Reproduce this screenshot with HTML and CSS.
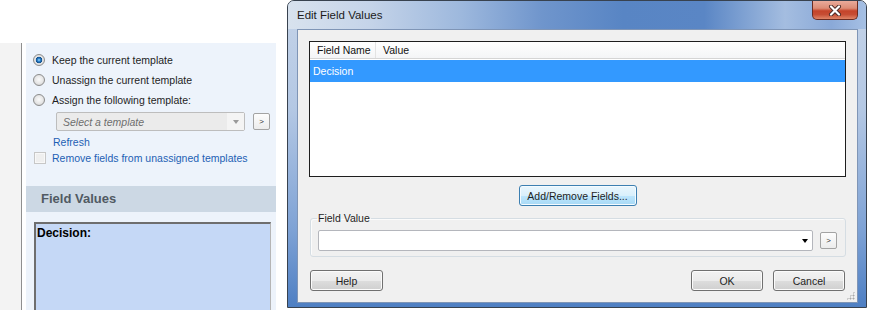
FILE: index.html
```html
<!DOCTYPE html>
<html lang="en">
<head>
  <meta charset="UTF-8" />
  <meta name="viewport" content="width=device-width, initial-scale=1.0" />
  <title>Edit Field Values</title>
  <link rel="stylesheet" href="styles.css">
</head>
<body>
  <div class="screen">
    <div class="host">
      <div class="host-top"></div>
      <div class="host-body">
        <div class="gutter"></div>
        <div class="panel">
          <div class="options">
            <label class="opt"><span class="radio checked"></span>Keep the current template</label>
            <label class="opt"><span class="radio"></span>Unassign the current template</label>
            <label class="opt"><span class="radio"></span>Assign the following template:</label>
            <div class="tpl-row">
              <div class="tpl-select">
                <span class="tpl-text">Select a template</span>
                <span class="tpl-drop"><span class="tri gray"></span></span>
              </div>
              <button class="mini-btn">&gt;</button>
            </div>
            <a class="link refresh">Refresh</a>
            <label class="opt check-opt"><span class="check"></span><span class="link">Remove fields from unassigned templates</span></label>
          </div>
          <div class="section-head">Field Values</div>
          <div class="section-body">
            <div class="notes"><b>Decision:</b></div>
          </div>
        </div>
      </div>
    </div>

    <div class="dialog">
      <div class="titlebar">
        <span class="title">Edit Field Values</span>
        <button class="close">
          <svg width="16" height="11" viewBox="0 0 16 11">
            <path d="M4 1.5 L12 9.5 M12 1.5 L4 9.5" stroke="#4a2a26" stroke-width="4" stroke-linecap="round" fill="none"/>
            <path d="M4 1.5 L12 9.5 M12 1.5 L4 9.5" stroke="#ffffff" stroke-width="2.2" stroke-linecap="round" fill="none"/>
          </svg>
        </button>
      </div>
      <div class="frame">
        <div class="client">
          <div class="listview">
            <div class="lv-head">
              <span class="col name">Field Name</span>
              <span class="col value">Value</span>
            </div>
            <div class="lv-row selected">Decision</div>
          </div>

          <div class="center-row">
            <button class="btn focus">Add/Remove Fields...</button>
          </div>

          <fieldset class="group">
            <legend>Field Value</legend>
            <div class="value-row">
              <div class="combo"><span class="tri"></span></div>
              <button class="mini-btn">&gt;</button>
            </div>
          </fieldset>

          <div class="actions">
            <button class="btn">Help</button>
            <span class="spacer"></span>
            <button class="btn">OK</button>
            <button class="btn">Cancel</button>
          </div>

          <span class="grip"></span>
        </div>
      </div>
    </div>
  </div>
</body>
</html>
```

FILE: styles.css
```css
body {
  margin: 0;
  font-family: "Liberation Sans", Arial, sans-serif;
  font-size: 10.5px;
  color: #1e1e1e;
  background: #fff;
}
button {
  font-family: inherit;
  font-size: inherit;
  color: inherit;
  padding: 0;
  cursor: default;
}
.screen {
  display: flex;
  width: 872px;
  height: 310px;
  overflow: hidden;
}

/* host window, left side */
.host {
  width: 287px;
  flex: none;
  display: flex;
  flex-direction: column;
}
.host-top {
  height: 43px;
  flex: none;
}
.host-body {
  flex: 1;
  display: flex;
}
.gutter {
  width: 21px;
  background: #f3f3f3;
  border-right: 1px solid #8f8f8f;
  margin-right: 4px;
}
.panel {
  width: 250px;
  background: #edf3fb;
  display: flex;
  flex-direction: column;
}
.options {
  padding: 7px 0 20px 7px;
}
.opt {
  display: flex;
  align-items: center;
  gap: 7px;
  height: 20px;
}
.radio {
  width: 12px;
  height: 12px;
  box-sizing: border-box;
  border-radius: 50%;
  border: 1px solid #8c8c8c;
  background: radial-gradient(circle at 50% 45%, #fbfbfb 0, #e6e6e6 4px, #d2d2d2 6px);
}
.radio.checked {
  background: radial-gradient(circle at 50% 50%, #9fdcff 0, #2a7fc8 1.6px, #0f4d8a 3px, #e9e9e9 3.6px, #d4d4d4 6px);
}
.tpl-row {
  display: flex;
  align-items: center;
  gap: 8px;
  margin: 2px 0 0 23px;
}
.tpl-select {
  width: 189px;
  height: 19px;
  box-sizing: border-box;
  border: 1px solid #bdbdbd;
  border-radius: 2px;
  background: #ebebeb;
  display: flex;
  align-items: center;
}
.tpl-text {
  flex: 1;
  padding-left: 6px;
  font-style: italic;
  color: #6e6e6e;
}
.tpl-drop {
  width: 17px;
  height: 17px;
  background: #f4f4f4;
  display: flex;
  align-items: center;
  justify-content: center;
}
.tri {
  width: 0;
  height: 0;
  border-left: 3.5px solid transparent;
  border-right: 3.5px solid transparent;
  border-top: 4px solid #000;
}
.tri.gray {
  border-top-color: #9a9a9a;
}
.mini-btn {
  width: 17px;
  height: 17px;
  box-sizing: border-box;
  border: 1px solid #a3a3a3;
  border-radius: 2px;
  background: linear-gradient(#fdfdfd, #ececec);
  font-size: 8px;
  line-height: 14px;
  color: #333;
}
.link {
  color: #1d5fb4;
}
.refresh {
  display: block;
  height: 16px;
  line-height: 16px;
  margin: 3px 0 0 20px;
}
.check-opt {
  height: 16px;
  padding-left: 1px;
  gap: 6px;
}
.check {
  width: 12px;
  height: 12px;
  box-sizing: border-box;
  border: 1px solid #c7c7c7;
  background: #efefef;
  box-shadow: inset 0 0 0 1px #f8f8f8;
}
.section-head {
  height: 26px;
  line-height: 26px;
  padding-left: 15px;
  background: #ccd8e4;
  color: #515a63;
  font-size: 13px;
  font-weight: bold;
}
.section-body {
  flex: 1;
  padding: 10px 5px 0 8px;
}
.notes {
  height: 100px;
  background: #c5d8f6;
  border-top: 2px solid #6e6e6e;
  border-left: 2px solid #6e6e6e;
  border-right: 1px solid #b5b5b5;
  padding: 2px 0 0 1px;
  font-size: 12px;
  line-height: 14px;
  color: #000;
}

/* dialog */
.dialog {
  width: 580px;
  height: 308px;
  flex: none;
  box-sizing: border-box;
  border: 1px solid #38424f;
  border-radius: 7px 7px 0 0;
  background: linear-gradient(180deg, #c4d3e8 0%, #b4c8e4 35%, #7ea2d5 75%, #4e7fc3 100%);
  display: flex;
  flex-direction: column;
  overflow: hidden;
}
.titlebar {
  height: 28px;
  flex: none;
  display: flex;
  align-items: flex-start;
  padding: 0 8px 0 9px;
  background: linear-gradient(90deg, #d8e2ee 0%, #c5d4e9 14%, #9db8dd 30%, #6f95cc 44%, #5885c4 58%, #5a86c5 72%, #a4bde0 86%, #8aa9d8 94%, #a6c0e4 100%);
}
.title {
  flex: 1;
  line-height: 28px;
  font-size: 11.5px;
  color: #1b1b1b;
}
.close {
  width: 46px;
  height: 19px;
  box-sizing: border-box;
  border: 1px solid #6a2c22;
  border-top: none;
  border-radius: 0 0 5px 5px;
  background: linear-gradient(#e9ab9b 0%, #dc8c76 40%, #c5442a 55%, #c64d34 75%, #df8668 100%);
  display: flex;
  align-items: center;
  justify-content: center;
}
.frame {
  flex: 1;
  padding: 0 8px 4px 9px;
}
.client {
  position: relative;
  height: 274px;
  box-sizing: border-box;
  border: 1px solid #7f95b6;
  background: #f0f0f0;
  padding: 11px 11px 0;
  display: flex;
  flex-direction: column;
}
.listview {
  height: 136px;
  box-sizing: border-box;
  border: 1px solid #1e1e1e;
  background: #fff;
}
.lv-head {
  display: flex;
  height: 17px;
  box-sizing: border-box;
  border-bottom: 1px solid #d5d5d5;
  background: linear-gradient(#fff, #f4f5f7);
}
.col {
  line-height: 16px;
  padding-left: 7px;
  color: #111;
}
.col.name {
  width: 66px;
  box-sizing: border-box;
  border-right: 1px solid #e3e3e3;
}
.lv-row {
  margin-top: 1px;
  height: 22px;
  line-height: 22px;
  padding-left: 3px;
}
.lv-row.selected {
  background: #3399ff;
  color: #fff;
}
.center-row {
  display: flex;
  justify-content: center;
  margin-top: 8px;
}
.btn {
  height: 21px;
  box-sizing: border-box;
  border: 1px solid #707070;
  border-radius: 3px;
  background: linear-gradient(#f2f2f2 0%, #ebebeb 50%, #dddddd 51%, #cfcfcf 100%);
  box-shadow: inset 0 0 0 1px #fbfbfb;
  width: 72px;
}
.btn.focus {
  width: 118px;
  border-color: #3c7fb1;
  background: linear-gradient(#eaf6fd 0%, #d9f0fc 50%, #bee6fd 51%, #a7d9f5 100%);
  box-shadow: inset 0 0 0 1px #f4fbff;
}
.group {
  margin: 6px 0 0 1px;
  padding: 5px 8px 5px 7px;
  border: 1px solid #d5dde3;
  border-radius: 3px;
  box-shadow: inset 1px 1px 0 #fbfbfb;
  min-width: 0;
}
.group legend {
  padding: 0 1px;
  margin-left: -1px;
  line-height: 13px;
  color: #1e1e1e;
}
.value-row {
  display: flex;
  align-items: center;
  gap: 7px;
}
.combo {
  width: 496px;
  height: 21px;
  box-sizing: border-box;
  border: 1px solid #b4b6bc;
  border-radius: 2px;
  background: #fff;
  display: flex;
  align-items: center;
  justify-content: flex-end;
  padding-right: 4px;
}
.actions {
  display: flex;
  gap: 10px;
  margin-top: 13px;
  padding: 0 1px;
}
.actions .btn:first-child {
  width: 73px;
}
.spacer {
  flex: 1;
}
.grip {
  position: absolute;
  right: 2px;
  bottom: 2px;
  width: 9px;
  height: 9px;
  background:
    radial-gradient(circle, #a8a8a8 0.8px, transparent 1.2px) 0 0 / 3px 3px;
  clip-path: polygon(100% 0, 100% 100%, 0 100%);
}
```
